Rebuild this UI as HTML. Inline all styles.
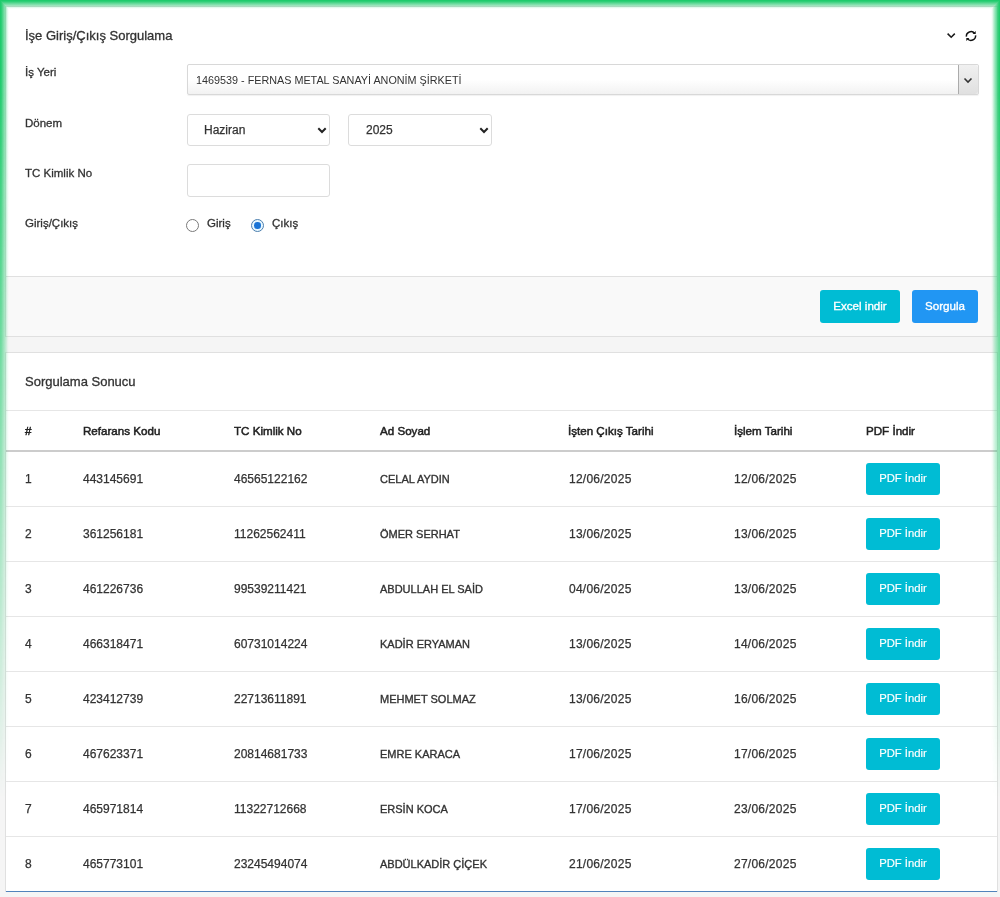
<!DOCTYPE html>
<html><head><meta charset="utf-8">
<style>
*{box-sizing:border-box;margin:0;padding:0}
html,body{width:1000px;height:897px;overflow:hidden;}
body{will-change:transform;background:#f5f5f5;font-family:"Liberation Sans",sans-serif;color:#3c3c3c}
.abs{position:absolute;white-space:nowrap}
.card1{position:absolute;left:5px;top:6px;width:993px;height:331px;background:#fff;border:1px solid #e0e0e0}
.foot{position:absolute;left:6px;top:276px;width:991px;height:60px;background:#f9f9f9;border-top:1px solid #e0e0e0}
.card2{position:absolute;left:5px;top:352px;width:993px;height:540px;background:#fff;border:1px solid #e0e0e0}
.t13{font-size:13px;line-height:13px;-webkit-text-stroke:0.3px #333}
.lbl{font-size:11.5px;line-height:12px;color:#333;-webkit-text-stroke:0.3px #333}
.sel{position:absolute;background:#fff;border:1px solid #dcdcdc;border-radius:3px}
.btn{position:absolute;height:32px;border-radius:3px;color:#fff;font-size:11.6px;line-height:32px;text-align:center;-webkit-text-stroke:0.35px #fff}
.hline{position:absolute;left:6px;width:991px;height:1px;background:#e6e6e6}
.th{font-size:11.6px;line-height:12px;color:#222;-webkit-text-stroke:0.5px #222}
.td{font-size:12px;line-height:12px;color:#333;-webkit-text-stroke:0.25px #333}
.dt{letter-spacing:0.25px}
.nm{font-size:11px;-webkit-text-stroke:0.35px #333}
.pdf{position:absolute;left:866px;width:74px;height:32px;border-radius:3px;background:#00bcd4;color:#fff;font-size:11.3px;line-height:31px;text-align:center;-webkit-text-stroke:0.15px #fff}
.glow{position:absolute;left:0;top:0;width:1000px;height:897px;pointer-events:none}
</style></head><body>
<div class="card1"></div>
<div class="foot"></div>
<div class="card2"></div>

<div class="abs t13" style="left:25px;top:29px;color:#333">İşe Giriş/Çıkış Sorgulama</div>
<svg class="abs" style="left:946px;top:32px" width="11" height="7" viewBox="0 0 11 7"><path d="M1.6 1.6 L5.2 5.2 L8.8 1.6" fill="none" stroke="#1a1a1a" stroke-width="1.5"/></svg>
<svg class="abs" style="left:963px;top:28px" width="16" height="16" viewBox="0 0 16 16"><path d="M3.4 8.6 A4.6 4.6 0 0 1 11.6 5.4" fill="none" stroke="#111" stroke-width="1.5"/><path d="M12.6 7.4 A4.6 4.6 0 0 1 4.4 10.6" fill="none" stroke="#111" stroke-width="1.5"/><path d="M12.7 3.0 L12.7 6.1 L9.6 6.1 Z" fill="#111"/><path d="M3.3 13.0 L3.3 9.9 L6.4 9.9 Z" fill="#111"/></svg>

<div class="abs lbl" style="left:25px;top:66px">İş Yeri</div>
<div class="sel" style="left:187px;top:64px;width:792px;height:31px;background:linear-gradient(#fff 0%,#fff 50%,#f2f2f2 100%);border-color:#d8d8d8;border-radius:2px;box-shadow:0 1px 1px rgba(0,0,0,0.06)"></div>
<div class="abs" style="left:958px;top:65px;width:20px;height:29px;background:linear-gradient(#f0f0f0,#e0e0e0);border-left:1px solid #ababab;border-radius:0 3px 3px 0"></div>
<svg class="abs" style="left:963px;top:77px" width="10" height="7" viewBox="0 0 10 7"><path d="M1.5 1.5 L5 5 L8.5 1.5" fill="none" stroke="#333" stroke-width="1.6"/></svg>
<div class="abs" style="left:196px;top:75px;font-size:10.8px;line-height:11px;color:#333">1469539 - FERNAS METAL SANAYİ ANONİM ŞİRKETİ</div>

<div class="abs lbl" style="left:25px;top:117px">Dönem</div>
<div class="sel" style="left:187px;top:114px;width:143px;height:32px"></div>
<div class="abs td" style="left:204px;top:124px">Haziran</div>
<svg class="abs" style="left:317px;top:127px" width="10" height="7" viewBox="0 0 10 7"><path d="M1.3 1.3 L5 5 L8.7 1.3" fill="none" stroke="#222" stroke-width="2"/></svg>
<div class="sel" style="left:348px;top:114px;width:144px;height:32px"></div>
<div class="abs td" style="left:366px;top:124px">2025</div>
<svg class="abs" style="left:479px;top:127px" width="10" height="7" viewBox="0 0 10 7"><path d="M1.3 1.3 L5 5 L8.7 1.3" fill="none" stroke="#222" stroke-width="2"/></svg>

<div class="abs lbl" style="left:25px;top:167px">TC Kimlik No</div>
<div class="sel" style="left:187px;top:164px;width:143px;height:33px"></div>

<div class="abs lbl" style="left:25px;top:217px">Giriş/Çıkış</div>
<div class="abs" style="left:186px;top:219px;width:13px;height:13px;border-radius:50%;border:1.3px solid #7a7a7a;background:#fff"></div>
<div class="abs lbl" style="left:207px;top:217px">Giriş</div>
<div class="abs" style="left:251px;top:219px;width:13px;height:13px;border-radius:50%;border:1.3px solid #4d7fae;background:#e8f8ff"><div style="position:absolute;left:2.2px;top:2.2px;width:6.6px;height:6.6px;border-radius:50%;background:#1a74d6"></div></div>
<div class="abs lbl" style="left:272px;top:217px">Çıkış</div>

<div class="btn" style="left:820px;top:290px;height:33px;line-height:31px;width:80px;background:#00bcd4">Excel indir</div>
<div class="btn" style="left:912px;top:290px;height:33px;line-height:31px;width:66px;background:#2196f3">Sorgula</div>

<div class="abs t13" style="left:25px;top:375px;color:#333">Sorgulama Sonucu</div>
<div class="hline" style="top:410px"></div>
<div class="abs th" style="left:25px;top:425px">#</div>
<div class="abs th" style="left:83px;top:425px">Refarans Kodu</div>
<div class="abs th" style="left:234px;top:425px">TC Kimlik No</div>
<div class="abs th" style="left:380px;top:425px">Ad Soyad</div>
<div class="abs th" style="left:568px;top:425px">İşten Çıkış Tarihi</div>
<div class="abs th" style="left:734px;top:425px">İşlem Tarihi</div>
<div class="abs th" style="left:866px;top:425px">PDF İndir</div>
<div class="hline" style="top:450px;height:2px;background:#cccccc"></div>

<div id="rows"><div class="abs td" style="left:25px;top:473px">1</div>
<div class="abs td" style="left:83px;top:473px">443145691</div>
<div class="abs td" style="left:234px;top:473px">46565122162</div>
<div class="abs td nm" style="left:380px;top:473px">CELAL AYDIN</div>
<div class="abs td dt" style="left:569px;top:473px">12/06/2025</div>
<div class="abs td dt" style="left:734px;top:473px">12/06/2025</div>
<div class="pdf" style="top:463px">PDF İndir</div>
<div class="hline" style="top:506px"></div>
<div class="abs td" style="left:25px;top:528px">2</div>
<div class="abs td" style="left:83px;top:528px">361256181</div>
<div class="abs td" style="left:234px;top:528px">11262562411</div>
<div class="abs td nm" style="left:380px;top:528px">ÖMER SERHAT</div>
<div class="abs td dt" style="left:569px;top:528px">13/06/2025</div>
<div class="abs td dt" style="left:734px;top:528px">13/06/2025</div>
<div class="pdf" style="top:518px">PDF İndir</div>
<div class="hline" style="top:561px"></div>
<div class="abs td" style="left:25px;top:583px">3</div>
<div class="abs td" style="left:83px;top:583px">461226736</div>
<div class="abs td" style="left:234px;top:583px">99539211421</div>
<div class="abs td nm" style="left:380px;top:583px">ABDULLAH EL SAİD</div>
<div class="abs td dt" style="left:569px;top:583px">04/06/2025</div>
<div class="abs td dt" style="left:734px;top:583px">13/06/2025</div>
<div class="pdf" style="top:573px">PDF İndir</div>
<div class="hline" style="top:616px"></div>
<div class="abs td" style="left:25px;top:638px">4</div>
<div class="abs td" style="left:83px;top:638px">466318471</div>
<div class="abs td" style="left:234px;top:638px">60731014224</div>
<div class="abs td nm" style="left:380px;top:638px">KADİR ERYAMAN</div>
<div class="abs td dt" style="left:569px;top:638px">13/06/2025</div>
<div class="abs td dt" style="left:734px;top:638px">14/06/2025</div>
<div class="pdf" style="top:628px">PDF İndir</div>
<div class="hline" style="top:671px"></div>
<div class="abs td" style="left:25px;top:693px">5</div>
<div class="abs td" style="left:83px;top:693px">423412739</div>
<div class="abs td" style="left:234px;top:693px">22713611891</div>
<div class="abs td nm" style="left:380px;top:693px">MEHMET SOLMAZ</div>
<div class="abs td dt" style="left:569px;top:693px">13/06/2025</div>
<div class="abs td dt" style="left:734px;top:693px">16/06/2025</div>
<div class="pdf" style="top:683px">PDF İndir</div>
<div class="hline" style="top:726px"></div>
<div class="abs td" style="left:25px;top:748px">6</div>
<div class="abs td" style="left:83px;top:748px">467623371</div>
<div class="abs td" style="left:234px;top:748px">20814681733</div>
<div class="abs td nm" style="left:380px;top:748px">EMRE KARACA</div>
<div class="abs td dt" style="left:569px;top:748px">17/06/2025</div>
<div class="abs td dt" style="left:734px;top:748px">17/06/2025</div>
<div class="pdf" style="top:738px">PDF İndir</div>
<div class="hline" style="top:781px"></div>
<div class="abs td" style="left:25px;top:803px">7</div>
<div class="abs td" style="left:83px;top:803px">465971814</div>
<div class="abs td" style="left:234px;top:803px">11322712668</div>
<div class="abs td nm" style="left:380px;top:803px">ERSİN KOCA</div>
<div class="abs td dt" style="left:569px;top:803px">17/06/2025</div>
<div class="abs td dt" style="left:734px;top:803px">23/06/2025</div>
<div class="pdf" style="top:793px">PDF İndir</div>
<div class="hline" style="top:836px"></div>
<div class="abs td" style="left:25px;top:858px">8</div>
<div class="abs td" style="left:83px;top:858px">465773101</div>
<div class="abs td" style="left:234px;top:858px">23245494074</div>
<div class="abs td nm" style="left:380px;top:858px">ABDÜLKADİR ÇİÇEK</div>
<div class="abs td dt" style="left:569px;top:858px">21/06/2025</div>
<div class="abs td dt" style="left:734px;top:858px">27/06/2025</div>
<div class="pdf" style="top:848px">PDF İndir</div></div><!--rows-->
<div class="hline" style="top:891px;background:#5283bb"></div>
<div class="glow" style="-webkit-mask-image:linear-gradient(to bottom,#000 72px,rgba(0,0,0,0) 797px);mask-image:linear-gradient(to bottom,#000 72px,rgba(0,0,0,0) 797px)">
<div style="position:absolute;left:10px;top:0;width:980px;height:10px;background:linear-gradient(to bottom, rgba(30,203,108,1) 0px, rgba(30,203,108,1) 1px, rgba(30,203,108,0.93) 1px, rgba(30,203,108,0.93) 2px, rgba(30,203,108,0.8) 2px, rgba(30,203,108,0.8) 3px, rgba(30,203,108,0.67) 3px, rgba(30,203,108,0.67) 4px, rgba(30,203,108,0.55) 4px, rgba(30,203,108,0.55) 5px, rgba(30,203,108,0.42) 5px, rgba(30,203,108,0.42) 6px, rgba(30,203,108,0.28) 6px, rgba(30,203,108,0.28) 7px, rgba(30,203,108,0.12) 7px, rgba(30,203,108,0.12) 8px, rgba(30,203,108,0.03) 8px, rgba(30,203,108,0.03) 9px, rgba(30,203,108,0) 9px, rgba(30,203,108,0) 10px)"></div>
<div style="position:absolute;left:0;top:10px;width:10px;height:887px;background:linear-gradient(to right, rgba(30,203,108,1) 0px, rgba(30,203,108,1) 1px, rgba(30,203,108,0.93) 1px, rgba(30,203,108,0.93) 2px, rgba(30,203,108,0.8) 2px, rgba(30,203,108,0.8) 3px, rgba(30,203,108,0.67) 3px, rgba(30,203,108,0.67) 4px, rgba(30,203,108,0.55) 4px, rgba(30,203,108,0.55) 5px, rgba(30,203,108,0.42) 5px, rgba(30,203,108,0.42) 6px, rgba(30,203,108,0.28) 6px, rgba(30,203,108,0.28) 7px, rgba(30,203,108,0.12) 7px, rgba(30,203,108,0.12) 8px, rgba(30,203,108,0.03) 8px, rgba(30,203,108,0.03) 9px, rgba(30,203,108,0) 9px, rgba(30,203,108,0) 10px)"></div>
<div style="position:absolute;right:0;top:10px;width:10px;height:887px;background:linear-gradient(to left, rgba(30,203,108,1) 0px, rgba(30,203,108,1) 1px, rgba(30,203,108,0.93) 1px, rgba(30,203,108,0.93) 2px, rgba(30,203,108,0.8) 2px, rgba(30,203,108,0.8) 3px, rgba(30,203,108,0.67) 3px, rgba(30,203,108,0.67) 4px, rgba(30,203,108,0.55) 4px, rgba(30,203,108,0.55) 5px, rgba(30,203,108,0.42) 5px, rgba(30,203,108,0.42) 6px, rgba(30,203,108,0.28) 6px, rgba(30,203,108,0.28) 7px, rgba(30,203,108,0.12) 7px, rgba(30,203,108,0.12) 8px, rgba(30,203,108,0.03) 8px, rgba(30,203,108,0.03) 9px, rgba(30,203,108,0) 9px, rgba(30,203,108,0) 10px)"></div>
<svg style="position:absolute;left:0;top:0" width="10" height="10" fill="#1ecb6c" shape-rendering="crispEdges"><rect x="0" y="0" width="10" height="1" fill-opacity="1"/><rect x="0" y="1" width="1" height="9" fill-opacity="1"/><rect x="1" y="1" width="9" height="1" fill-opacity="0.93"/><rect x="1" y="2" width="1" height="8" fill-opacity="0.93"/><rect x="2" y="2" width="8" height="1" fill-opacity="0.8"/><rect x="2" y="3" width="1" height="7" fill-opacity="0.8"/><rect x="3" y="3" width="7" height="1" fill-opacity="0.67"/><rect x="3" y="4" width="1" height="6" fill-opacity="0.67"/><rect x="4" y="4" width="6" height="1" fill-opacity="0.55"/><rect x="4" y="5" width="1" height="5" fill-opacity="0.55"/><rect x="5" y="5" width="5" height="1" fill-opacity="0.42"/><rect x="5" y="6" width="1" height="4" fill-opacity="0.42"/><rect x="6" y="6" width="4" height="1" fill-opacity="0.28"/><rect x="6" y="7" width="1" height="3" fill-opacity="0.28"/><rect x="7" y="7" width="3" height="1" fill-opacity="0.12"/><rect x="7" y="8" width="1" height="2" fill-opacity="0.12"/><rect x="8" y="8" width="2" height="1" fill-opacity="0.03"/><rect x="8" y="9" width="1" height="1" fill-opacity="0.03"/></svg><svg style="position:absolute;left:990px;top:0;transform:scaleX(-1)" width="10" height="10" fill="#1ecb6c" shape-rendering="crispEdges"><rect x="0" y="0" width="10" height="1" fill-opacity="1"/><rect x="0" y="1" width="1" height="9" fill-opacity="1"/><rect x="1" y="1" width="9" height="1" fill-opacity="0.93"/><rect x="1" y="2" width="1" height="8" fill-opacity="0.93"/><rect x="2" y="2" width="8" height="1" fill-opacity="0.8"/><rect x="2" y="3" width="1" height="7" fill-opacity="0.8"/><rect x="3" y="3" width="7" height="1" fill-opacity="0.67"/><rect x="3" y="4" width="1" height="6" fill-opacity="0.67"/><rect x="4" y="4" width="6" height="1" fill-opacity="0.55"/><rect x="4" y="5" width="1" height="5" fill-opacity="0.55"/><rect x="5" y="5" width="5" height="1" fill-opacity="0.42"/><rect x="5" y="6" width="1" height="4" fill-opacity="0.42"/><rect x="6" y="6" width="4" height="1" fill-opacity="0.28"/><rect x="6" y="7" width="1" height="3" fill-opacity="0.28"/><rect x="7" y="7" width="3" height="1" fill-opacity="0.12"/><rect x="7" y="8" width="1" height="2" fill-opacity="0.12"/><rect x="8" y="8" width="2" height="1" fill-opacity="0.03"/><rect x="8" y="9" width="1" height="1" fill-opacity="0.03"/></svg>
</div>
</body></html>
